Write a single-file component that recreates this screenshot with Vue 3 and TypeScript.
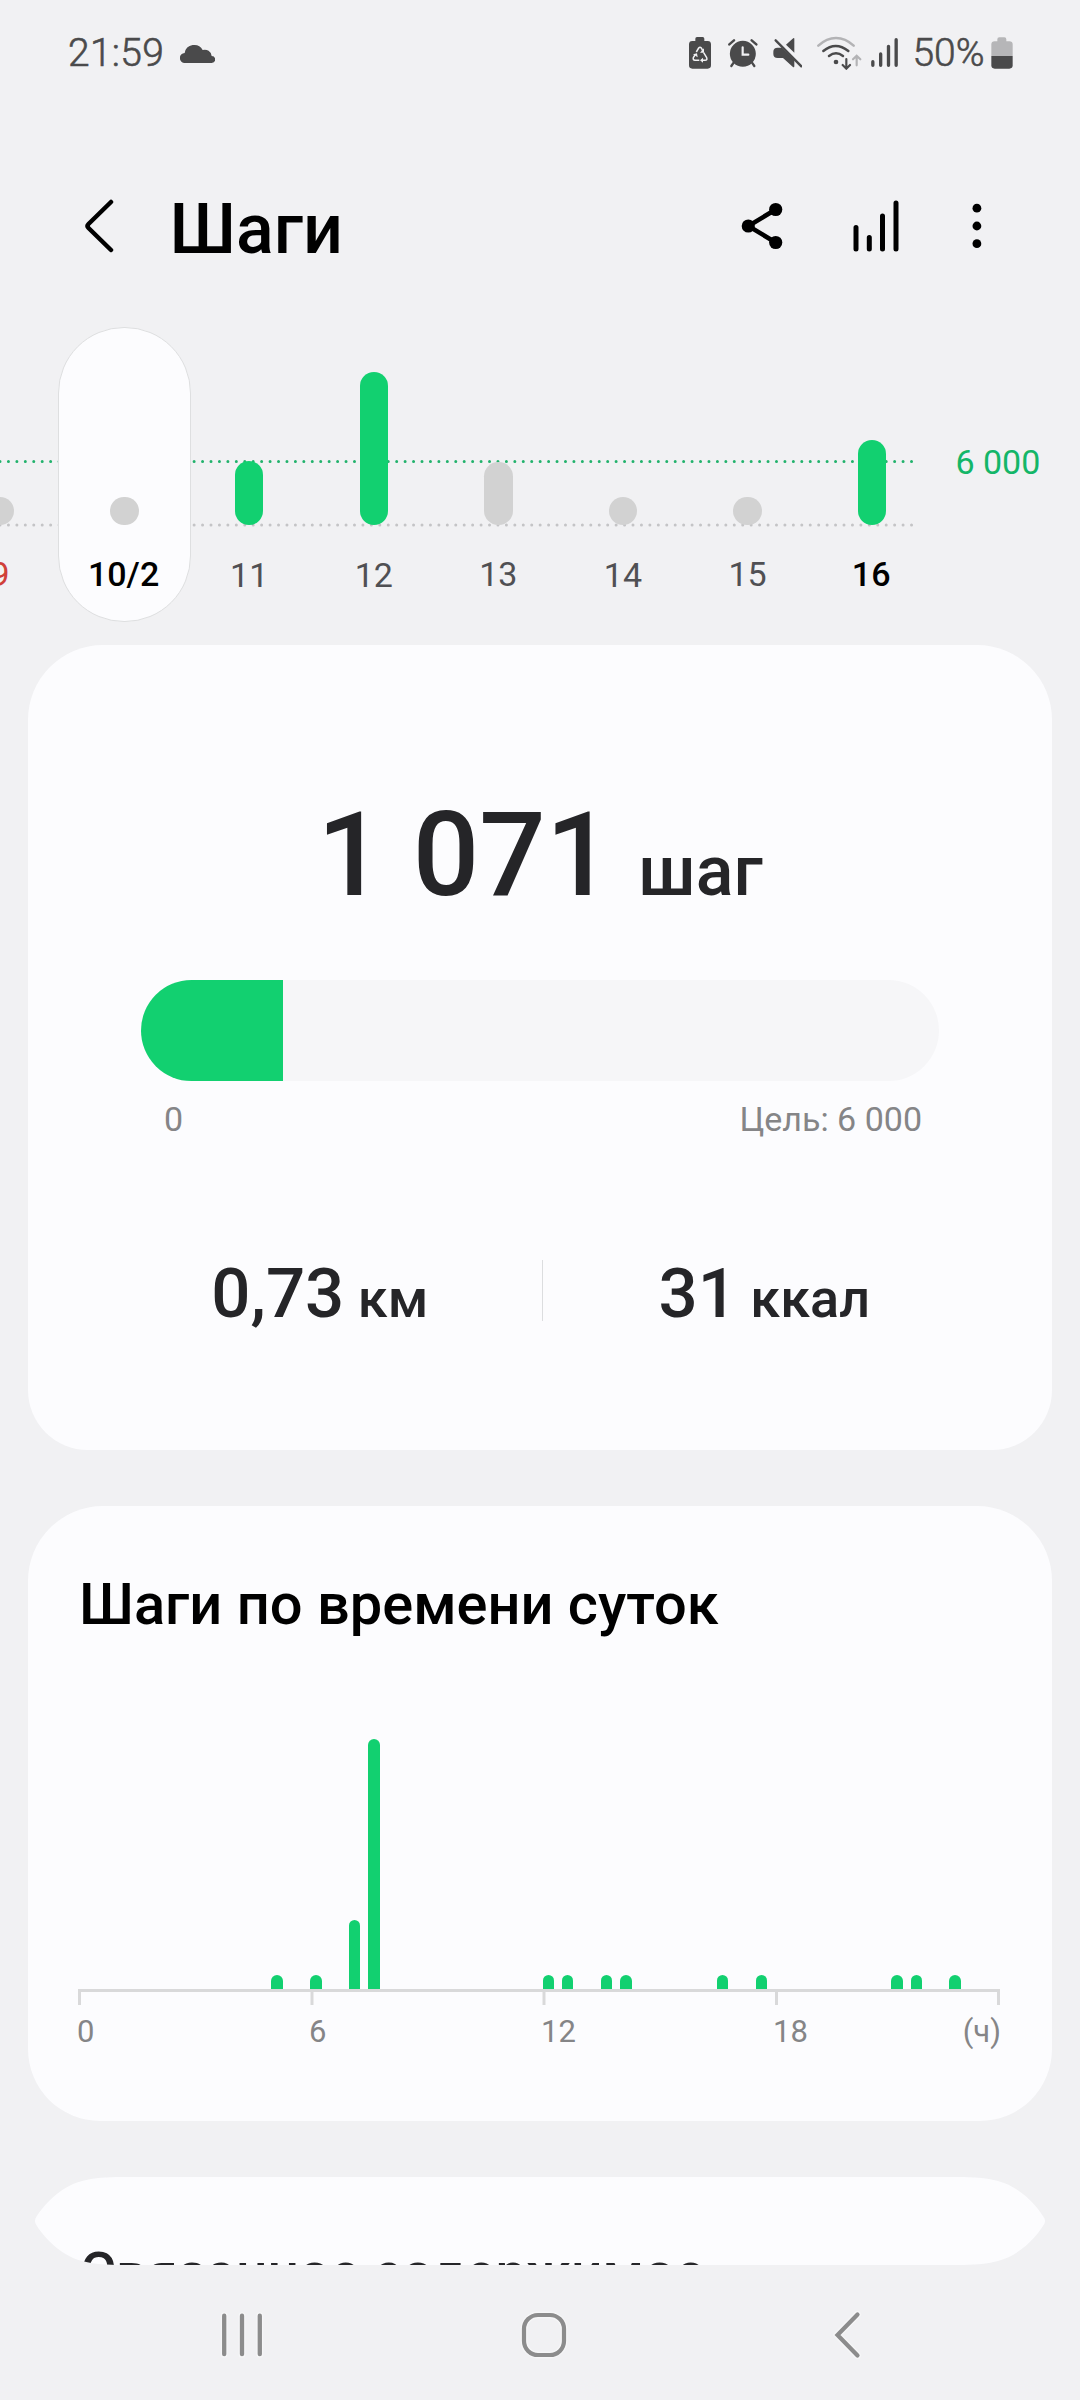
<script setup lang="ts">
interface Day {
  label: string
  height: number
  reached?: boolean
  tone?: 'sunday' | 'strong'
  selected?: boolean
  low?: boolean
}

interface HalfHour {
  slot: number
  height: number
}

const days: Day[] = [
  { label: '9', height: 28.5, tone: 'sunday' },
  { label: '10/2', height: 28.5, tone: 'strong', selected: true },
  { label: '11', height: 64.5, reached: true, low: true },
  { label: '12', height: 153.5, reached: true, low: true },
  { label: '13', height: 63.5 },
  { label: '14', height: 28.5, low: true },
  { label: '15', height: 28.5 },
  { label: '16', height: 85.5, reached: true, tone: 'strong' },
]

const activity: HalfHour[] = [
  { slot: 10, height: 14 },
  { slot: 12, height: 14 },
  { slot: 14, height: 69.5 },
  { slot: 15, height: 250 },
  { slot: 24, height: 14 },
  { slot: 25, height: 14 },
  { slot: 27, height: 14 },
  { slot: 28, height: 14 },
  { slot: 33, height: 14 },
  { slot: 35, height: 14 },
  { slot: 42, height: 14 },
  { slot: 43, height: 14 },
  { slot: 45, height: 14 },
]

const hours = ['0', '6', '12', '18']
const steps = 1071
const goal = 6000
</script>

<template>
  <div class="screen">
    <div class="status">
      <span class="clock">21:59</span>
      <svg class="cloud" viewBox="417 66 105 60" width="35" height="20">
        <path d="M432 126a15 15 0 0 1-1-30A29 29 0 0 1 485 87A21 21 0 0 1 512 105A10.500 10.500 0 0 1 512 126Z" fill="#4a4a4b" />
      </svg>
      <div class="indicators">
        <svg viewBox="57 48 66 100" width="22" height="33.33">
          <path d="M76 63v-7q0-5 5-5h17q5 0 5 5v7h10q10 0 10 10v63q0 10-10 10H67q-10 0-10-10V73q0-10 10-10Z" fill="#4a4a4b" />
          <g fill="none" stroke="#f1f1f3" stroke-width="4.500">
            <path d="M79 96l7-12q4-5 8 0l4 8M101 98l9 15q3 8-5 8h-8M88 121H75q-7-1-5-8l5-8" />
          </g>
          <path d="M102 85v13H90zM99 113v15l-9-7zM69 103l12-3 2 12z" fill="#f1f1f3" />
        </svg>
        <svg class="alarm" viewBox="173 48 89 100" width="29.67" height="33.33">
          <g fill="none" stroke="#4a4a4b" stroke-linecap="round">
            <path d="M177 73l14-12M258 73l-14-12" stroke-width="7.500" />
            <path d="M190 128l-7 10M245 128l7 10" stroke-width="7" />
          </g>
          <circle cx="217.500" cy="101.500" r="39" fill="#4a4a4b" />
          <path d="M217 82v22h17" fill="none" stroke="#f1f1f3" stroke-width="6.500" stroke-linecap="round" />
        </svg>
        <svg class="mute" viewBox="308 48 89 100" width="29.67" height="33.33">
          <path d="M372 56v42l-25-24 19-17q6-5 6-1ZM322 83h12l38 37v18q0 6-5 2l-29-26h-16q-13 0-13-12v-7q0-12 13-12Z" fill="#4a4a4b" />
          <path d="M316 61l77 78" stroke="#4a4a4b" stroke-width="7" stroke-linecap="round" />
        </svg>
        <svg class="wifi" viewBox="440 46 135 102" width="45" height="34">
          <g fill="none" stroke-linecap="round" stroke-width="7.500">
            <path d="M444 75Q469 52 497 52T550 75" stroke="#b3b3b5" />
            <path d="M459 91Q496 61 534 91M476 106Q497 90 518 106" stroke="#4a4a4b" />
            <path d="M528 115v27M517 133l11 11 11-11" stroke="#4a4a4b" stroke-width="6.500" />
            <path d="M559 134v-27M548 116l11-11 11 11" stroke="#b3b3b5" stroke-width="6.500" />
          </g>
          <circle cx="497" cy="124" r="7" fill="#4a4a4b" />
        </svg>
        <svg class="signal" viewBox="603 48 82 100" width="27.33" height="33.33">
          <path d="M608.500 125v11M632 102v34M655.500 79v57M678.500 59v77" stroke="#4a4a4b" stroke-width="10" stroke-linecap="round" />
        </svg>
        <span class="percent">50%</span>
        <svg class="battery" viewBox="962 48 66 100" width="22" height="33.33">
          <path d="M963 108V73q0-9 10-9h8v-6q0-6 6-6h15q6 0 6 6v6h9q10 0 10 9v35Z" fill="#b6b6b8" />
          <path d="M963 108h64v28q0 10-10 10h-44q-10 0-10-10Z" fill="#4a4a4b" />
        </svg>
      </div>
    </div>

    <header class="bar">
      <svg class="back" viewBox="84 199 30 54" width="30" height="54">
        <path d="M111 202L88.500 224Q86.500 226 88.500 228L111 250" fill="none" stroke="#000" stroke-width="4.500" stroke-linecap="round" />
      </svg>
      <h1>Шаги</h1>
      <svg class="share" viewBox="740 201 44 50" width="44" height="50">
        <path d="M775.700 209.500L748.300 226l27.400 16.500" fill="none" stroke="#000" stroke-width="4.500" />
        <circle cx="748.300" cy="226" r="6.600" />
        <circle cx="775.700" cy="209.500" r="6.600" />
        <circle cx="775.700" cy="242.500" r="6.600" />
      </svg>
      <svg class="trend" viewBox="852 198 48 56" width="48" height="56">
        <path d="M856 227.500v21.500M869.300 237.500v11.500M882.500 216v33M896 203v46" stroke="#000" stroke-width="5" stroke-linecap="round" />
      </svg>
      <svg class="more" viewBox="970 202 14 48" width="14" height="48">
        <circle cx="976.900" cy="208.200" r="4.400" />
        <circle cx="976.900" cy="226" r="4.400" />
        <circle cx="976.900" cy="243.700" r="4.400" />
      </svg>
    </header>

    <section class="week">
      <svg class="guides" viewBox="0 0 920 295" width="920" height="295">
        <path d="M0 134.600H913" stroke="#22b26c" />
        <path d="M0 198H913" stroke="#c4c4c6" />
      </svg>
      <div v-for="day in days" :key="day.label" class="day" :class="{ selected: day.selected }">
        <div class="column">
          <div class="pillar" :class="{ reached: day.reached }" :style="{ height: day.height + 'px' }"></div>
        </div>
        <span class="date" :class="[day.tone, { low: day.low }]">{{ day.label }}</span>
      </div>
      <span class="target">6 000</span>
    </section>

    <section class="card summary">
      <div class="total"><strong>1 071</strong><span>шаг</span></div>
      <div class="track">
        <div class="fill" :style="{ width: (steps / goal) * 100 + '%' }"></div>
      </div>
      <div class="range"><span>0</span><span>Цель: 6 000</span></div>
      <div class="stats">
        <div class="stat"><b>0,73</b><span>км</span></div>
        <div class="divider"></div>
        <div class="stat"><b>31</b><span>ккал</span></div>
      </div>
    </section>

    <section class="card daily">
      <h2>Шаги по времени суток</h2>
      <div class="plot">
        <div
          v-for="item in activity"
          :key="item.slot"
          class="spike"
          :style="{ gridColumn: item.slot + 1, height: item.height + 'px' }"
        ></div>
      </div>
      <svg class="axis" viewBox="0 0 922 16" width="922" height="16">
        <path d="M0 1.500H922M1.500 0V16M234 0V16M466 0V16M698.500 0V16M920.500 0V16" stroke="#d9d9da" stroke-width="3" />
      </svg>
      <div class="hours">
        <span v-for="hour in hours" :key="hour">{{ hour }}</span>
        <span class="unit">(ч)</span>
      </div>
    </section>

    <section class="related">
      <h2>Связанное содержимое</h2>
    </section>

    <nav class="nav">
      <svg viewBox="220 2309 44 52" width="44" height="52">
        <g fill="none" stroke-linecap="round">
          <path d="M224.200 2315.700v38.500M242 2315.700v38.500M259.800 2315.700v38.500" stroke="#f6f6f7" stroke-width="7" />
          <path d="M224.200 2315.700v38.500M242 2315.700v38.500M259.800 2315.700v38.500" stroke="#8c8c8c" stroke-width="4.300" />
        </g>
      </svg>
      <svg class="home" viewBox="518 2309 52 52" width="52" height="52">
        <rect x="524" y="2315" width="40" height="40" rx="14" fill="none" stroke="#f6f6f7" stroke-width="7" />
        <rect x="524" y="2315" width="40" height="40" rx="14" fill="none" stroke="#8c8c8c" stroke-width="4.200" />
      </svg>
      <svg class="return" viewBox="833 2309 30 52" width="30" height="52">
        <g fill="none" stroke-linecap="round">
          <path d="M857.500 2314.500L837.500 2335L857.500 2355.500" stroke="#f6f6f7" stroke-width="7" />
          <path d="M857.500 2314.500L837.500 2335L857.500 2355.500" stroke="#8c8c8c" stroke-width="4.200" />
        </g>
      </svg>
    </nav>
  </div>
</template>

<style>
body {
  background: #f1f1f3;
}
</style>

<style scoped>
.screen {
  width: 1080px;
  height: 2400px;
  overflow: hidden;
  display: flex;
  flex-direction: column;
  background: #f1f1f3;
  font-family: Roboto, "Noto Sans", sans-serif;
  color: #252528;
}
svg {
  display: block;
  flex: none;
}
h1,
h2 {
  margin: 0;
  font-weight: 500;
  white-space: nowrap;
}
.status {
  box-sizing: border-box;
  flex: none;
  height: 105px;
  padding: 0 67.500px 0 68px;
  display: flex;
  align-items: center;
  font-size: 39px;
  font-weight: 300;
  line-height: 44px;
  color: #4a4a4b;
  -webkit-text-stroke: 0.600px #4a4a4b;
}
.clock {
  letter-spacing: 0.300px;
}
.cloud {
  margin-left: 15.500px;
}
.indicators {
  margin-left: auto;
  display: flex;
  align-items: center;
}
.alarm {
  margin-left: 16.700px;
}
.mute {
  margin-left: 15.300px;
}
.wifi {
  margin-left: 14.300px;
}
.signal {
  margin-left: 9.300px;
}
.percent {
  margin-left: 14px;
}
.battery {
  margin-left: 6px;
}
.bar {
  box-sizing: border-box;
  flex: none;
  height: 222px;
  padding: 20px 96px 0 84px;
  display: flex;
  align-items: center;
}
h1 {
  margin-left: 55.500px;
  padding-top: 5px;
  font-size: 70px;
  line-height: 80px;
  color: #000;
}
.share {
  margin-left: auto;
}
.trend {
  margin-left: 68px;
}
.more {
  margin-left: 70px;
}
.week {
  position: relative;
  flex: none;
  height: 295px;
  display: flex;
  margin-left: -62.300px;
}
.guides {
  position: absolute;
  left: 62.300px;
  top: 0;
}
.guides path {
  fill: none;
  stroke-width: 3;
  stroke-linecap: round;
  stroke-dasharray: 0 8.440;
}
.day {
  position: relative;
  flex: none;
  width: 124.600px;
  display: flex;
  flex-direction: column;
  align-items: center;
}
.selected::before {
  content: "";
  position: absolute;
  inset: 0 -4px;
  box-sizing: border-box;
  border: 1px solid #dedfe0;
  border-radius: 66px;
  background: #fcfcfe;
}
.column {
  position: relative;
  height: 198px;
  display: flex;
  align-items: flex-end;
}
.pillar {
  width: 28.500px;
  border-radius: 14.250px;
  background: #d2d2d2;
}
.pillar.reached {
  background: #12d070;
}
.date {
  position: relative;
  margin-top: 29px;
  font-size: 34px;
  line-height: 40px;
  color: #505053;
}
.date.low {
  margin-top: 30px;
}
.date.sunday {
  color: #d04038;
}
.date.strong {
  margin-right: 2px;
  font-weight: 500;
  color: #000;
}
.target {
  margin: 115px 0 0 21px;
  font-size: 34px;
  line-height: 40px;
  color: #14b668;
  white-space: nowrap;
}
.card {
  box-sizing: border-box;
  flex: none;
  width: 1024px;
  margin-left: 28px;
  border-radius: 75px 75px 72px 72px;
  background: #fcfcfe;
}
.summary {
  height: 805px;
  margin-top: 23px;
  padding-top: 150px;
  border-radius: 75px 75px 60px 60px;
}
.total {
  height: 120px;
  display: flex;
  justify-content: center;
  align-items: baseline;
  line-height: 120px;
  font-weight: 500;
}
.total strong {
  font-size: 117px;
  font-weight: 500;
}
.total span {
  margin-left: 26px;
  font-size: 70px;
}
.track {
  height: 101px;
  margin: 65px 113px 0;
  border-radius: 51px;
  overflow: hidden;
  background: #f6f6f8;
}
.fill {
  height: 100%;
  background: #12d070;
}
.range {
  margin: 18px 130px 0 136px;
  display: flex;
  justify-content: space-between;
  font-size: 34px;
  line-height: 40px;
  color: #858587;
}
.stats {
  height: 80px;
  margin: 115px 66px 0 70px;
  display: flex;
  line-height: 80px;
  font-weight: 500;
}
.stat {
  flex: 1;
  display: flex;
  justify-content: center;
  align-items: baseline;
}
.stat b {
  font-size: 69px;
  font-weight: 500;
}
.stat span {
  margin-left: 13.500px;
  font-size: 54px;
}
.divider {
  width: 1px;
  height: 61px;
  margin-top: 6px;
  background: #dcdddf;
}
.daily {
  height: 615px;
  margin-top: 56px;
  padding: 63px 0 0 50px;
}
h2 {
  font-size: 57.800px;
  line-height: 70px;
}
.daily h2 {
  margin-left: 1px;
  color: #000;
}
.plot {
  height: 350px;
  display: grid;
  grid-template-columns: repeat(48, 19.383px);
  margin-left: -0.500px;
  align-items: end;
}
.spike {
  grid-row: 1;
  width: 11.600px;
  border-radius: 6px 6px 0 0;
  background: #12d070;
}
.hours {
  width: 924px;
  margin: 8px 0 0 -1px;
  display: flex;
  font-size: 31px;
  line-height: 38px;
  color: #858587;
}
.hours span {
  flex: none;
  width: 232px;
}
.hours span:nth-child(4) {
  width: 140px;
}
.hours .unit {
  flex: 1;
  width: auto;
  text-align: right;
}
.related {
  box-sizing: border-box;
  flex: none;
  height: 88px;
  margin: 56px 28px 0;
  padding: 61px 0 0 52px;
  overflow: hidden;
  background: #fcfcfe;
  clip-path: path("M89 0H935C951 0.500 962 1.500 970 4C993 10 1010 30 1016.500 41.500Q1017.500 44 1016.500 46.500C1010 58 993 78 970 84C962 86.500 951 87.500 935 88H89C73 87.500 62 86.500 54 84C31 78 14 58 7.500 46.500Q6.500 44 7.500 41.500C14 30 31 10 54 4C62 1.500 73 0.500 89 0Z");
}
.related h2 {
  font-size: 55.200px;
}
.nav {
  flex: none;
  height: 135px;
  box-sizing: border-box;
  display: flex;
  padding: 44px 0 0 220px;
}
.home {
  margin-left: 254px;
}
.return {
  margin-left: 263px;
}
</style>
